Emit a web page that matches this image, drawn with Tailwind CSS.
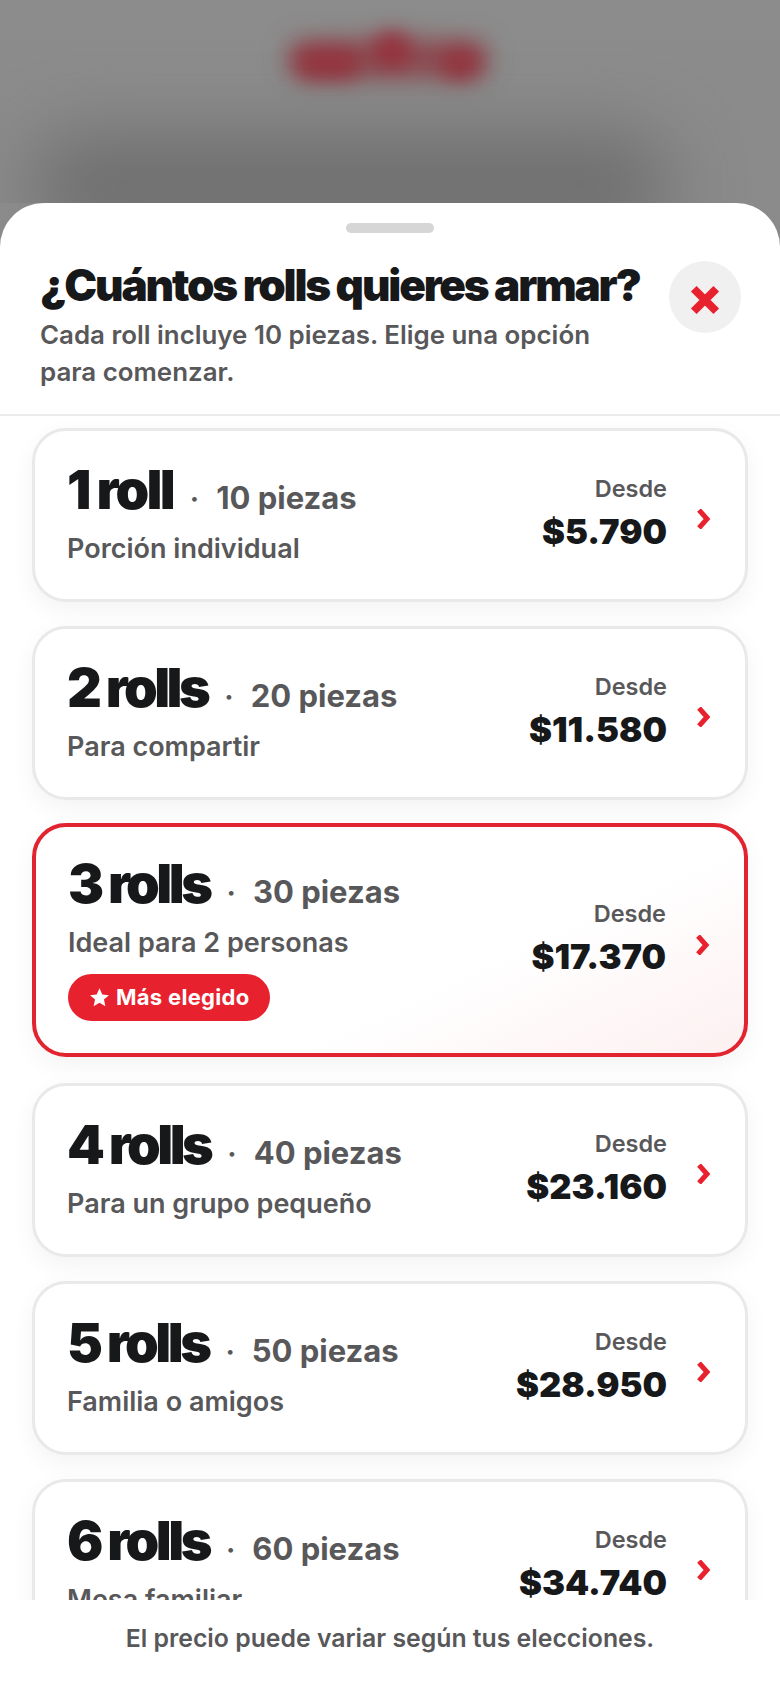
<!DOCTYPE html>
<html lang="es">
  <head>
    <meta charset="UTF-8" />
    <meta name="viewport" content="width=device-width, initial-scale=1.0" />
    <title>Rolls</title>
    <script src="https://cdn.jsdelivr.net/npm/@tailwindcss/browser@4"></script>
  </head>
  <body class="bg-white font-['Inter',sans-serif] antialiased">
    <main class="relative flex h-[1688px] w-[780px] flex-col overflow-hidden bg-gradient-to-b from-[#8c8c8c] via-[#858585] to-[#727272]">
      <!-- Blurred page behind the sheet -->
      <div class="relative h-[203px] shrink-0 overflow-hidden">
        <div class="absolute left-[288px] top-[40px] h-[38px] w-[200px] rounded-full bg-[#8c4a50] blur-[12px]"></div>
        <div class="absolute left-[296px] top-[50px] h-[28px] w-[64px] rounded-full bg-[#95333f] blur-[10px]"></div>
        <div class="absolute left-[372px] top-[32px] h-[36px] w-[40px] rounded-full bg-[#95333f] blur-[10px]"></div>
        <div class="absolute left-[440px] top-[50px] h-[28px] w-[40px] rounded-full bg-[#95333f] blur-[10px]"></div>
        <div class="absolute left-[30px] top-[135px] h-[100px] w-[640px] rounded-full bg-[#5c5c5c]/60 blur-[36px]"></div>
      </div>

      <!-- Sheet -->
      <section class="flex min-h-0 flex-1 flex-col rounded-t-[44px] bg-white">
        <div class="mx-auto mt-5 h-2.5 w-[88px] shrink-0 rounded-full bg-[#d6d6d6]"></div>

        <header class="flex h-[183px] shrink-0 items-start justify-between border-b-2 border-[#ececec] pl-10 pr-[39px] pt-[26px]">
          <div>
            <h1 class="whitespace-nowrap text-[44px] font-black leading-[52px] tracking-[-2.15px] text-[#17181a]">¿Cuántos rolls quieres armar?</h1>
            <p class="mt-[5px] w-[590px] text-[25.9px] font-semibold leading-[37px] text-[#58585a]">Cada roll incluye 10 piezas. Elige una opción<br />para comenzar.</p>
          </div>
          <button class="mt-[2px] flex size-[72px] shrink-0 items-center justify-center rounded-full bg-[#f0f0f1]" aria-label="Cerrar">
            <svg class="mt-[6px] size-[30px]" viewBox="0 0 28 28" fill="none"><path d="M3.5 3.5 24.5 24.5M24.5 3.5 3.500 24.500" stroke="#e8212e" stroke-width="7.500" /></svg>
          </button>
        </header>

        <!-- Options -->
        <div class="flex min-h-0 flex-1 flex-col gap-6 overflow-hidden px-8 pt-[12px]">
          <article class="flex h-[174px] shrink-0 items-center rounded-[34px] border-[3px] border-[#e9e9e9] bg-white pl-[32px] pr-[33px] shadow-[0_8px_24px_rgba(0,0,0,0.05)]">
            <div class="flex-1">
              <div class="flex items-baseline"><span class="text-[54px] font-black leading-[62px] tracking-[-2.8px] text-[#17181a]">1 roll</span><span class="mx-[17px] text-[28px] font-bold text-[#58585a]">·</span><span class="text-[31px] font-bold text-[#58585a]">10 piezas</span></div>
              <p class="mt-[10px] text-[27px] font-semibold leading-[34px] text-[#58585a]">Porción individual</p>
              <div class="h-[5px]"></div>
            </div>
            <div class="mb-[2px] text-right">
              <p class="text-[23.5px] font-semibold leading-[30px] text-[#58585a]">Desde</p>
              <p class="mt-[6px] text-[34.5px] font-black leading-[44px] text-[#17181a]">$5.790</p>
            </div>
            <svg class="ml-[29px] mt-[8px] h-[20px] w-[16px] shrink-0" viewBox="0 0 16 20" fill="none"><path d="M3 1 11 10 3 19" stroke="#e8212e" stroke-width="5" /></svg>
          </article>

          <article class="flex h-[174px] shrink-0 items-center rounded-[34px] border-[3px] border-[#e9e9e9] bg-white pl-[32px] pr-[33px] shadow-[0_8px_24px_rgba(0,0,0,0.05)]">
            <div class="flex-1">
              <div class="flex items-baseline"><span class="text-[54px] font-black leading-[62px] tracking-[-3.5px] text-[#17181a]">2 rolls</span><span class="mx-[17px] text-[28px] font-bold text-[#58585a]">·</span><span class="text-[31px] font-bold text-[#58585a]">20 piezas</span></div>
              <p class="mt-[10px] text-[27px] font-semibold leading-[34px] text-[#58585a]">Para compartir</p>
              <div class="h-[5px]"></div>
            </div>
            <div class="mb-[2px] text-right">
              <p class="text-[23.5px] font-semibold leading-[30px] text-[#58585a]">Desde</p>
              <p class="mt-[6px] text-[34.5px] font-black leading-[44px] text-[#17181a]">$11.580</p>
            </div>
            <svg class="ml-[29px] mt-[8px] h-[20px] w-[16px] shrink-0" viewBox="0 0 16 20" fill="none"><path d="M3 1 11 10 3 19" stroke="#e8212e" stroke-width="5" /></svg>
          </article>

          <article class="-mt-px mb-[2px] flex h-[234px] shrink-0 items-center rounded-[34px] border-[4px] border-[#e1242f] bg-[linear-gradient(155deg,#ffffff_62%,#fdf0f1_100%)] pl-[32px] pr-[33px] shadow-[0_8px_24px_rgba(0,0,0,0.05)]">
            <div class="flex-1">
              <div class="flex items-baseline"><span class="text-[54px] font-black leading-[62px] tracking-[-3.5px] text-[#17181a]">3 rolls</span><span class="mx-[17px] text-[28px] font-bold text-[#58585a]">·</span><span class="text-[31px] font-bold text-[#58585a]">30 piezas</span></div>
              <p class="mt-[10px] text-[27px] font-semibold leading-[34px] text-[#58585a]">Ideal para 2 personas</p>
              <span class="mt-[14px] flex h-[47px] w-[202px] items-center gap-[6px] rounded-full bg-[#e8212e] pl-[21px] text-[22px] font-bold tracking-[0.3px] text-white">
                <svg class="size-[21px] shrink-0" viewBox="0 0 24 24" fill="#fff"><path d="M12 1.500l3.200 7 7.600.8-5.700 5.100 1.600 7.500L12 18l-6.700 3.900 1.600-7.500L1.200 9.300l7.600-.8z" /></svg>
                Más elegido
              </span>
              <div class="h-[6px]"></div>
            </div>
            <div class="mb-[2px] text-right">
              <p class="text-[23.5px] font-semibold leading-[30px] text-[#58585a]">Desde</p>
              <p class="mt-[6px] text-[34.5px] font-black leading-[44px] text-[#17181a]">$17.370</p>
            </div>
            <svg class="ml-[29px] mt-[10px] h-[20px] w-[16px] shrink-0" viewBox="0 0 16 20" fill="none"><path d="M3 1 11 10 3 19" stroke="#e8212e" stroke-width="5" /></svg>
          </article>

          <article class="flex h-[174px] shrink-0 items-center rounded-[34px] border-[3px] border-[#e9e9e9] bg-white pl-[32px] pr-[33px] shadow-[0_8px_24px_rgba(0,0,0,0.05)]">
            <div class="flex-1">
              <div class="flex items-baseline"><span class="text-[54px] font-black leading-[62px] tracking-[-3.5px] text-[#17181a]">4 rolls</span><span class="mx-[17px] text-[28px] font-bold text-[#58585a]">·</span><span class="text-[31px] font-bold text-[#58585a]">40 piezas</span></div>
              <p class="mt-[10px] text-[27px] font-semibold leading-[34px] text-[#58585a]">Para un grupo pequeño</p>
              <div class="h-[5px]"></div>
            </div>
            <div class="mb-[2px] text-right">
              <p class="text-[23.5px] font-semibold leading-[30px] text-[#58585a]">Desde</p>
              <p class="mt-[6px] text-[34.5px] font-black leading-[44px] text-[#17181a]">$23.160</p>
            </div>
            <svg class="ml-[29px] mt-[8px] h-[20px] w-[16px] shrink-0" viewBox="0 0 16 20" fill="none"><path d="M3 1 11 10 3 19" stroke="#e8212e" stroke-width="5" /></svg>
          </article>

          <article class="flex h-[174px] shrink-0 items-center rounded-[34px] border-[3px] border-[#e9e9e9] bg-white pl-[32px] pr-[33px] shadow-[0_8px_24px_rgba(0,0,0,0.05)]">
            <div class="flex-1">
              <div class="flex items-baseline"><span class="text-[54px] font-black leading-[62px] tracking-[-3.5px] text-[#17181a]">5 rolls</span><span class="mx-[17px] text-[28px] font-bold text-[#58585a]">·</span><span class="text-[31px] font-bold text-[#58585a]">50 piezas</span></div>
              <p class="mt-[10px] text-[27px] font-semibold leading-[34px] text-[#58585a]">Familia o amigos</p>
              <div class="h-[5px]"></div>
            </div>
            <div class="mb-[2px] text-right">
              <p class="text-[23.5px] font-semibold leading-[30px] text-[#58585a]">Desde</p>
              <p class="mt-[6px] text-[34.5px] font-black leading-[44px] text-[#17181a]">$28.950</p>
            </div>
            <svg class="ml-[29px] mt-[8px] h-[20px] w-[16px] shrink-0" viewBox="0 0 16 20" fill="none"><path d="M3 1 11 10 3 19" stroke="#e8212e" stroke-width="5" /></svg>
          </article>

          <article class="flex h-[174px] shrink-0 items-center rounded-[34px] border-[3px] border-[#e9e9e9] bg-white pl-[32px] pr-[33px] shadow-[0_8px_24px_rgba(0,0,0,0.05)]">
            <div class="flex-1">
              <div class="flex items-baseline"><span class="text-[54px] font-black leading-[62px] tracking-[-3.5px] text-[#17181a]">6 rolls</span><span class="mx-[17px] text-[28px] font-bold text-[#58585a]">·</span><span class="text-[31px] font-bold text-[#58585a]">60 piezas</span></div>
              <p class="mt-[10px] text-[27px] font-semibold leading-[34px] text-[#58585a]">Mesa familiar</p>
              <div class="h-[5px]"></div>
            </div>
            <div class="mb-[2px] text-right">
              <p class="text-[23.5px] font-semibold leading-[30px] text-[#58585a]">Desde</p>
              <p class="mt-[6px] text-[34.5px] font-black leading-[44px] text-[#17181a]">$34.740</p>
            </div>
            <svg class="ml-[29px] mt-[8px] h-[20px] w-[16px] shrink-0" viewBox="0 0 16 20" fill="none"><path d="M3 1 11 10 3 19" stroke="#e8212e" stroke-width="5" /></svg>
          </article>
        </div>

        <footer class="h-[88px] shrink-0 bg-white pt-[21px] text-center text-[24.8px] font-semibold leading-[34px] text-[#58585a]">El precio puede variar según tus elecciones.</footer>
      </section>
    </main>
  </body>
</html>
